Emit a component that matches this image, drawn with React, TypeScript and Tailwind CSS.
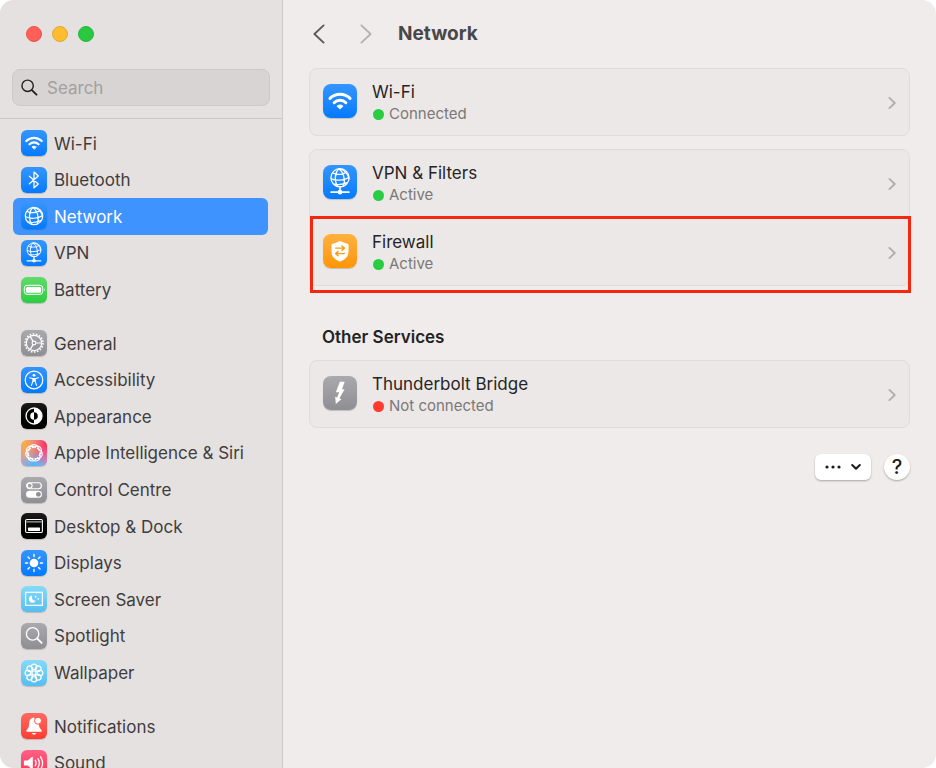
import type { ReactNode } from 'react';

const WifiGlyph = () => (
  <g fill="none" stroke="#fff" strokeWidth="2.2" strokeLinecap="round">
    <path d="M5.3 11A10.9 10.9 0 0 1 20.7 11" />
    <path d="M8.5 14.3A6.4 6.4 0 0 1 17.5 14.3" />
    <path d="M13 18.9L10.9 16.9Q13 15.2 15.1 16.9Z" fill="#fff" stroke="#fff" strokeWidth=".8" strokeLinejoin="round" />
  </g>
);

const BluetoothGlyph = () => (
  <path d="M8.4 9.2L17.3 16.9L13 20.7V5.1L17.3 9L8.4 16.7" fill="none" stroke="#fff" strokeWidth="1.3" strokeLinecap="round" strokeLinejoin="round" />
);

const GlobeLines = () => (
  <g fill="none" stroke="#fff" strokeWidth="1.2">
    <circle cx="13" cy="13" r="8.7" />
    <path d="M11.6 4.4C7.6 9 7.4 17 11.2 21.6M11.6 4.4C16.2 7 18.6 15 16.4 21.1M11.6 4.4C17 4.6 20.8 9 21.6 14.4M5.6 8.2C9.6 10.4 16 10.2 19.6 7.2M4.3 13.6C9 16.4 17 15.6 21.8 12.4M6.4 18.7C10.6 20 16 19.4 20.4 17.4" />
    <circle cx="9.4" cy="9.6" r=".9" fill="#fff" stroke="none" />
    <circle cx="16.9" cy="15" r=".9" fill="#fff" stroke="none" />
  </g>
);

const VpnGlyph = () => (
  <>
    <g transform="translate(2.6 -.6) scale(.8)">
      <GlobeLines />
    </g>
    <path d="M13 16.8V19.5M6.2 20.8H19.8" stroke="#fff" strokeWidth="1.3" strokeLinecap="round" />
    <circle cx="13" cy="20.8" r="1.8" fill="#fff" />
  </>
);

const BatteryGlyph = () => (
  <>
    <rect x="3.3" y="8.3" width="18.4" height="9" rx="2.8" fill="none" stroke="#fff" strokeWidth="1" />
    <rect x="4.9" y="9.9" width="15.2" height="5.8" rx="1.5" fill="#fff" />
    <path d="M23 11.3Q24.6 12.8 23 14.3Z" fill="#fff" />
  </>
);

const GearGlyph = () => (
  <g fill="none" stroke="#fff">
    <circle cx="13" cy="13" r="9" strokeWidth="1.6" strokeDasharray="1.6 1.54" />
    <circle cx="13" cy="13" r="7.7" strokeWidth="1.2" />
    <circle cx="13" cy="13" r="1.9" strokeWidth="1.1" />
    <path d="M14.9 13H20.6M12 11.4L9.2 6.4M12 14.6L9.2 19.6" strokeWidth="1.2" />
  </g>
);

const AccessibilityGlyph = () => (
  <>
    <circle cx="13" cy="13" r="8.8" fill="none" stroke="#fff" strokeWidth="1.2" />
    <circle cx="13" cy="8.3" r="1.4" fill="#fff" />
    <path d="M8.6 10.8L12 11.6V14L10.4 18.4M17.4 10.8L14 11.6V14L15.6 18.4" fill="none" stroke="#fff" strokeWidth="1.1" strokeLinecap="round" />
    <path d="M11.6 11.2H14.4V14.6H11.6Z" fill="#fff" />
  </>
);

const AppearanceGlyph = () => (
  <>
    <circle cx="13" cy="13" r="8" fill="#000" stroke="#fff" strokeWidth="1.3" />
    <path d="M13 5A8 8 0 0 1 13 21V16.8A3.8 3.8 0 0 0 13 9.2ZM13 9.2A3.8 3.8 0 0 0 13 16.8Z" fill="#fff" />
  </>
);

const SiriGlyph = () => (
  <g fill="none" stroke="#fff" strokeWidth="1.1">
    {[0, 51.4, 102.9, 154.3, 205.7, 257.1, 308.6].map((deg) => (
      <path key={deg} d="M7.6 11.2C9.4 2.4 16.6 2.4 18.4 11.2" transform={`rotate(${deg} 13 13)`} />
    ))}
  </g>
);

const ControlGlyph = () => (
  <>
    <rect x="5.6" y="5.7" width="14.8" height="6" rx="3" fill="none" stroke="#fff" strokeWidth="1.1" />
    <circle cx="8.7" cy="8.7" r="2.4" fill="none" stroke="#fff" strokeWidth="1.1" />
    <rect x="5" y="13.8" width="16" height="7" rx="3.5" fill="#fff" />
    <circle cx="17.4" cy="17.3" r="2.4" fill="#8e8e93" />
  </>
);

const DockGlyph = () => (
  <>
    <rect x="4.6" y="6.5" width="16.8" height="13" rx="1.2" fill="none" stroke="#fff" strokeWidth="1.1" />
    <path d="M5.4 8.9H20.6" stroke="#fff" strokeWidth=".8" />
    <rect x="7" y="14.6" width="12" height="3.3" rx=".6" fill="#fff" />
  </>
);

const DisplaysGlyph = () => (
  <>
    <circle cx="13" cy="13" r="4.3" fill="#fff" />
    <g stroke="#fff" strokeWidth="1.4" strokeLinecap="round">
      {[0, 45, 90, 135, 180, 225, 270, 315].map((deg) => (
        <path key={deg} d="M13 4.5V6.6" transform={`rotate(${deg} 13 13)`} />
      ))}
    </g>
  </>
);

const ScreenSaverGlyph = () => (
  <>
    <rect x="4.6" y="6.3" width="16.8" height="13" fill="none" stroke="#fff" strokeWidth="1.2" />
    <path d="M11 9.4A3.7 3.7 0 1 0 14.8 14.8A3.9 3.9 0 0 1 11 9.4Z" fill="#fff" />
    <path d="M14.7 9.3L15.1 10.4L16.2 10.8L15.1 11.2L14.7 12.3L14.3 11.2L13.2 10.8L14.3 10.4Z" fill="#fff" />
    <circle cx="17.2" cy="12.9" r=".8" fill="#fff" />
  </>
);

const SpotlightGlyph = () => (
  <g fill="none" stroke="#fff" strokeLinecap="round">
    <circle cx="11.6" cy="10.9" r="6.2" strokeWidth="1.3" />
    <path d="M16.2 15.5L20.6 19.9" strokeWidth="1.9" />
  </g>
);

const WallpaperGlyph = () => (
  <g fill="none" stroke="#fff" strokeWidth="1.2">
    <circle cx="13" cy="13" r="2" />
    {[0, 45, 90, 135, 180, 225, 270, 315].map((deg) => (
      <ellipse key={deg} cx="13" cy="7" rx="2.7" ry="2.9" transform={`rotate(${deg} 13 13)`} />
    ))}
  </g>
);

const BellGlyph = () => (
  <>
    <path d="M13 4.6C9.4 5 8.3 7.6 8.2 10.6C8.1 14 7.4 15.4 5.6 16.9C4.9 17.7 5.2 18.8 6.3 18.8H19.7C20.8 18.8 21.1 17.7 20.4 16.9C18.8 15.6 18 14 17.8 11Z" fill="#fff" />
    <path d="M10.7 19.9H15.3Q14.7 21.7 13 21.7Q11.3 21.7 10.7 19.9Z" fill="#fff" />
    <circle cx="17" cy="7.7" r="3.5" fill="#fff" stroke="#ff5548" strokeWidth="1" />
  </>
);

const SoundGlyph = () => (
  <>
    <path d="M3.6 10.6H6.7L10.7 7Q11.8 6.3 11.8 7.6V18.4Q11.8 19.7 10.7 19L6.7 15.4H3.6Q2.9 15.4 2.9 14.7V11.3Q2.9 10.6 3.6 10.6Z" fill="#fff" />
    <path d="M14.3 10.3Q15.9 13 14.3 15.7M17 8.6Q19.7 13 17 17.4M19.6 6.8Q23.6 13 19.6 19.2" fill="none" stroke="#fff" strokeWidth="1.3" strokeLinecap="round" />
  </>
);

const FirewallGlyph = () => (
  <>
    <path d="M13 5.4Q13.5 5.4 14 5.8Q16 7 18.6 7.5Q19.5 7.7 19.5 8.7V13.6C19.5 17.4 17 19.4 13.7 20.8Q13 21.1 12.3 20.8C9 19.4 6.5 17.4 6.5 13.6V8.7Q6.5 7.7 7.4 7.5Q10 7 12 5.8Q12.5 5.4 13 5.4Z" fill="#fff" />
    <path d="M9.7 10.8H16M14.5 9.1L16.3 10.8L14.5 12.5M16.3 15H10M11.5 13.3L9.7 15L11.5 16.7" fill="none" stroke="#ff9b10" strokeWidth="1.1" strokeLinecap="round" strokeLinejoin="round" />
  </>
);

const BoltGlyph = () => (
  <path d="M12.9 4.4H16.6L14.5 10.1H16.5L12.6 17.1L14 17.8L9.8 21.5L9.3 15.9L10.8 16.4L12.4 12.5H9.8Z" fill="#fff" />
);

const BLUE = 'bg-linear-to-b from-[#3395ff] to-[#007aff]';
const GRAY = 'bg-linear-to-b from-[#aaaaae] to-[#8e8e93]';
const BLACK = 'bg-linear-to-b from-[#1c1c1c] to-black';
const SKY = 'bg-linear-to-b from-[#85dafa] to-[#55bef0]';
const SIRI = 'bg-[#dc94d0] bg-[radial-gradient(circle_at_0%_10%,#ffae2e,transparent_65%),radial-gradient(circle_at_100%_15%,#ff2d55,transparent_65%),radial-gradient(circle_at_50%_100%,#45bdf8,transparent_65%)]';

const Tile = ({ tone, large = false, children }: { tone: string, large?: boolean, children: ReactNode }) => (
  <span className={`block shrink-0 shadow-[0_1px_1px_rgba(0,0,0,0.18)] ${large ? 'size-[34px] rounded-lg' : 'size-[26px] rounded-md'} ${tone}`}>
    <svg viewBox="0 0 26 26" className="size-full" aria-hidden="true">{children}</svg>
  </span>
);

type NavItem = { label: string, tone: string, glyph: ReactNode };

const connections: NavItem[] = [
  { label: 'Wi-Fi', tone: BLUE, glyph: <WifiGlyph /> },
  { label: 'Bluetooth', tone: BLUE, glyph: <BluetoothGlyph /> },
  { label: 'Network', tone: BLUE, glyph: <GlobeLines /> },
  { label: 'VPN', tone: BLUE, glyph: <VpnGlyph /> },
  { label: 'Battery', tone: 'bg-linear-to-b from-[#5fdb6c] to-[#28cd41]', glyph: <BatteryGlyph /> },
];

const system: NavItem[] = [
  { label: 'General', tone: GRAY, glyph: <GearGlyph /> },
  { label: 'Accessibility', tone: BLUE, glyph: <AccessibilityGlyph /> },
  { label: 'Appearance', tone: BLACK, glyph: <AppearanceGlyph /> },
  { label: 'Apple Intelligence & Siri', tone: SIRI, glyph: <SiriGlyph /> },
  { label: 'Control Centre', tone: GRAY, glyph: <ControlGlyph /> },
  { label: 'Desktop & Dock', tone: BLACK, glyph: <DockGlyph /> },
  { label: 'Displays', tone: BLUE, glyph: <DisplaysGlyph /> },
  { label: 'Screen Saver', tone: SKY, glyph: <ScreenSaverGlyph /> },
  { label: 'Spotlight', tone: GRAY, glyph: <SpotlightGlyph /> },
  { label: 'Wallpaper', tone: SKY, glyph: <WallpaperGlyph /> },
];

const alerts: NavItem[] = [
  { label: 'Notifications', tone: 'bg-linear-to-b from-[#ff6961] to-[#ff3b30]', glyph: <BellGlyph /> },
  { label: 'Sound', tone: 'bg-linear-to-b from-[#ff5f85] to-[#ff2d55]', glyph: <SoundGlyph /> },
];

const NavGroup = ({ items, height }: { items: NavItem[], height: string }) => (
  <ul className={`grid auto-rows-fr ${height}`}>
    {items.map(({ label, tone, glyph }) => {
      const active = label === 'Network';
      return (
        <li key={label}>
          <a
            href="#"
            aria-current={active ? 'page' : undefined}
            className={`flex h-full items-center gap-[7px] rounded-md pl-2 text-[17px] ${active ? 'bg-[#3e93fe] text-white' : 'text-[#3f3d3d]'}`}
          >
            <Tile tone={tone}>{glyph}</Tile>
            <span className="pt-[2px]">{label}</span>
          </a>
        </li>
      );
    })}
  </ul>
);

const Sidebar = () => (
  <aside className="flex w-[283px] shrink-0 flex-col overflow-hidden border-r border-[#cfcbca] bg-[#e5e1e0]">
    <div className="border-b border-[#cac6c5] px-3 pt-[26px] pb-3">
      <div className="flex gap-[10px] pl-[14px]">
        <button aria-label="Close" className="size-4 rounded-full border border-[#e8524b] bg-[#ff5f57]" />
        <button aria-label="Minimise" className="size-4 rounded-full border border-[#e2a82e] bg-[#febc2e]" />
        <button aria-label="Zoom" className="size-4 rounded-full border border-[#25b83b] bg-[#28c840]" />
      </div>
      <label className="mt-[27px] flex h-[37px] items-center gap-[9px] rounded-lg border border-[#cdc9c8] bg-[#d8d4d3] px-2">
        <svg viewBox="0 0 18 18" className="size-[17px] shrink-0" fill="none" stroke="#1f1f1f" strokeLinecap="round" aria-hidden="true">
          <circle cx="7" cy="7.2" r="6" strokeWidth="1.5" />
          <path d="M11.5 11.8L16.4 16.6" strokeWidth="2" />
        </svg>
        <input type="text" aria-label="Search" placeholder="Search" className="w-full min-w-0 bg-transparent pt-[2px] text-[17px] text-[#3f3d3d] outline-none placeholder:text-[#a3a09f]" />
      </label>
    </div>
    <nav className="flex flex-col gap-[17px] pt-[6px] pr-[14px] pl-[13px]">
      <NavGroup items={connections} height="h-[183px]" />
      <NavGroup items={system} height="h-[366px]" />
      <NavGroup items={alerts} height="h-[73px]" />
    </nav>
  </aside>
);

const Chevron = () => (
  <svg viewBox="0 0 10 14" className="h-[14px] w-[10px] shrink-0" fill="none" stroke="#b1aead" strokeWidth="1.9" strokeLinecap="round" strokeLinejoin="round" aria-hidden="true">
    <path d="M2.4 1.9L7.8 7L2.4 12.1" />
  </svg>
);

type ServiceProps = { name: string, status: string, tone: string, connected?: boolean, highlighted?: boolean, children: ReactNode };

const Service = ({ name, status, tone, connected = true, highlighted = false, children }: ServiceProps) => (
  <button className="relative flex w-full items-center gap-[15px] pt-3 pr-3 pb-[10px] pl-[13px] text-left">
    <span className="mt-[3px] self-start">
      <Tile tone={tone} large>{children}</Tile>
    </span>
    <span className="flex-1">
      <span className="block text-[17px] leading-[22px] text-[#262525]">{name}</span>
      <span className="flex items-center gap-[5px] pl-px text-[15px] leading-[22px] text-[#7b7877]">
        <span className={`size-[11px] rounded-full ${connected ? 'bg-[#28cd41]' : 'bg-[#ff3b30]'}`} />
        {status}
      </span>
    </span>
    <Chevron />
    {highlighted && <span className="absolute -top-[3px] -right-[2px] -bottom-2 left-0 border-[3px] border-[#f5270f]" />}
  </button>
);

const Card = ({ children }: { children: ReactNode }) => (
  <div className="rounded-lg border border-[#e0dcdb] bg-[#ece8e7]">{children}</div>
);

function App() {
  return (
    <div className="h-screen bg-white font-['Inter','Liberation_Sans',sans-serif]">
      <div className="flex h-full overflow-hidden rounded-[14px] bg-[#f0eceb]">
        <Sidebar />
        <main className="min-w-0 flex-1 px-[26px]">
          <header className="flex h-[68px] items-center">
            <button aria-label="Back" className="w-12 pl-[3px]">
              <svg viewBox="0 0 14 20" className="h-5 w-[14px]" fill="none" stroke="#5c5a5a" strokeWidth="1.9" strokeLinecap="round" strokeLinejoin="round">
                <path d="M11.6 1.4L2.4 10L11.6 18.6" />
              </svg>
            </button>
            <button aria-label="Forward" disabled className="w-[41px] pl-[2px]">
              <svg viewBox="0 0 14 20" className="h-5 w-[14px]" fill="none" stroke="#b4b1b0" strokeWidth="1.9" strokeLinecap="round" strokeLinejoin="round">
                <path d="M2.4 1.4L11.6 10L2.4 18.6" />
              </svg>
            </button>
            <h1 className="text-[19px] leading-6 font-bold text-[#494747]">Network</h1>
          </header>

          <Card>
            <Service name="Wi-Fi" status="Connected" tone={BLUE}><WifiGlyph /></Service>
          </Card>

          <div className="mt-[13px]">
            <Card>
              <Service name="VPN & Filters" status="Active" tone={BLUE}><VpnGlyph /></Service>
              <div className="h-[3px]" />
              <Service name="Firewall" status="Active" tone="bg-linear-to-b from-[#ffb13b] to-[#ff9500]" highlighted><FirewallGlyph /></Service>
            </Card>
          </div>

          <h2 className="mt-[39px] mb-[11px] pl-[13px] text-[17px] leading-6 font-semibold text-[#242323]">Other Services</h2>
          <Card>
            <Service name="Thunderbolt Bridge" status="Not connected" tone={GRAY} connected={false}><BoltGlyph /></Service>
          </Card>

          <div className="mt-[26px] flex justify-end gap-[13px]">
            <button aria-label="More options" className="flex h-[26px] w-14 items-center justify-center gap-[10px] rounded-md bg-white shadow-[0_1px_2px_rgba(0,0,0,0.3)]">
              <svg viewBox="0 0 16 4" className="h-1 w-4" fill="#1c1c1c" aria-hidden="true">
                <circle cx="2" cy="2" r="1.6" />
                <circle cx="8" cy="2" r="1.6" />
                <circle cx="14" cy="2" r="1.6" />
              </svg>
              <svg viewBox="0 0 10 8" className="h-2 w-[10px]" fill="none" stroke="#1c1c1c" strokeWidth="2" strokeLinecap="round" strokeLinejoin="round" aria-hidden="true">
                <path d="M1.2 2L5 5.8L8.8 2" />
              </svg>
            </button>
            <button aria-label="Help" className="size-[26px] rounded-full bg-white text-[20px] leading-[26px] font-medium text-[#1c1c1c] shadow-[0_1px_2px_rgba(0,0,0,0.3)]">?</button>
          </div>
        </main>
      </div>
    </div>
  );
}

export default App;
